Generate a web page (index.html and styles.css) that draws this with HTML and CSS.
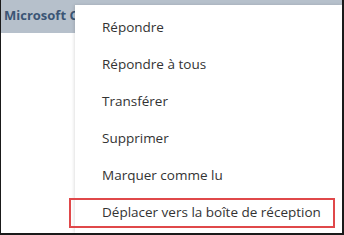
FILE: index.html
```html
<!DOCTYPE html>
<html lang="fr">
<head>
  <meta charset="UTF-8">
  <title>Menu contextuel</title>
  <link rel="stylesheet" href="styles.css">
</head>
<body>
  <div class="frame">
    <div class="mail-header"><span class="sender">Microsoft Corporation</span></div>
    <div class="mail-body"></div>

    <!-- Context menu -->
    <ul class="context-menu">
      <li>Répondre</li>
      <li>Répondre à tous</li>
      <li>Transférer</li>
      <li>Supprimer</li>
      <li>Marquer comme lu</li>
      <li class="highlight">Déplacer vers la boîte de réception</li>
    </ul>
  </div>
</body>
</html>
```

FILE: styles.css
```css
* { box-sizing: border-box; }
body {
  margin: 0;
  font-family: 'Open Sans', 'Noto Sans', sans-serif;
  background: #fff;
}
.frame {
  position: relative;
  width: 344px;
  height: 235px;
  border-left: 1px solid #1a1a1a;
  border-right: 2px solid #1a1a1a;
  border-bottom: 2px solid #1a1a1a;
  overflow: hidden;
}
.mail-header {
  height: 33px;
  background: #b6c0cb;
  color: #3b5575;
  font-weight: bold;
  font-size: 13px;
  padding: 6px 0 0 3px;
}
.sender {
  display: block;
  width: 71px;
  overflow: hidden;
  white-space: nowrap;
}
.context-menu {
  position: absolute;
  left: 74px;
  top: 5px;
  right: 0;
  bottom: 0;
  margin: 0;
  padding: 8px 7px 0 6px;
  list-style: none;
  background: #fff;
  box-shadow: -1px 0 3px rgba(0, 0, 0, 0.12);
}
.context-menu li {
  height: 37px;
  margin-left: -12px;
  padding: 3px 0 0 31px;
  font-size: 13.5px;
  color: #333;
  border: 2px solid transparent;
}
.context-menu li.highlight {
  height: 30px;
  border-color: #e0484a;
}
```
